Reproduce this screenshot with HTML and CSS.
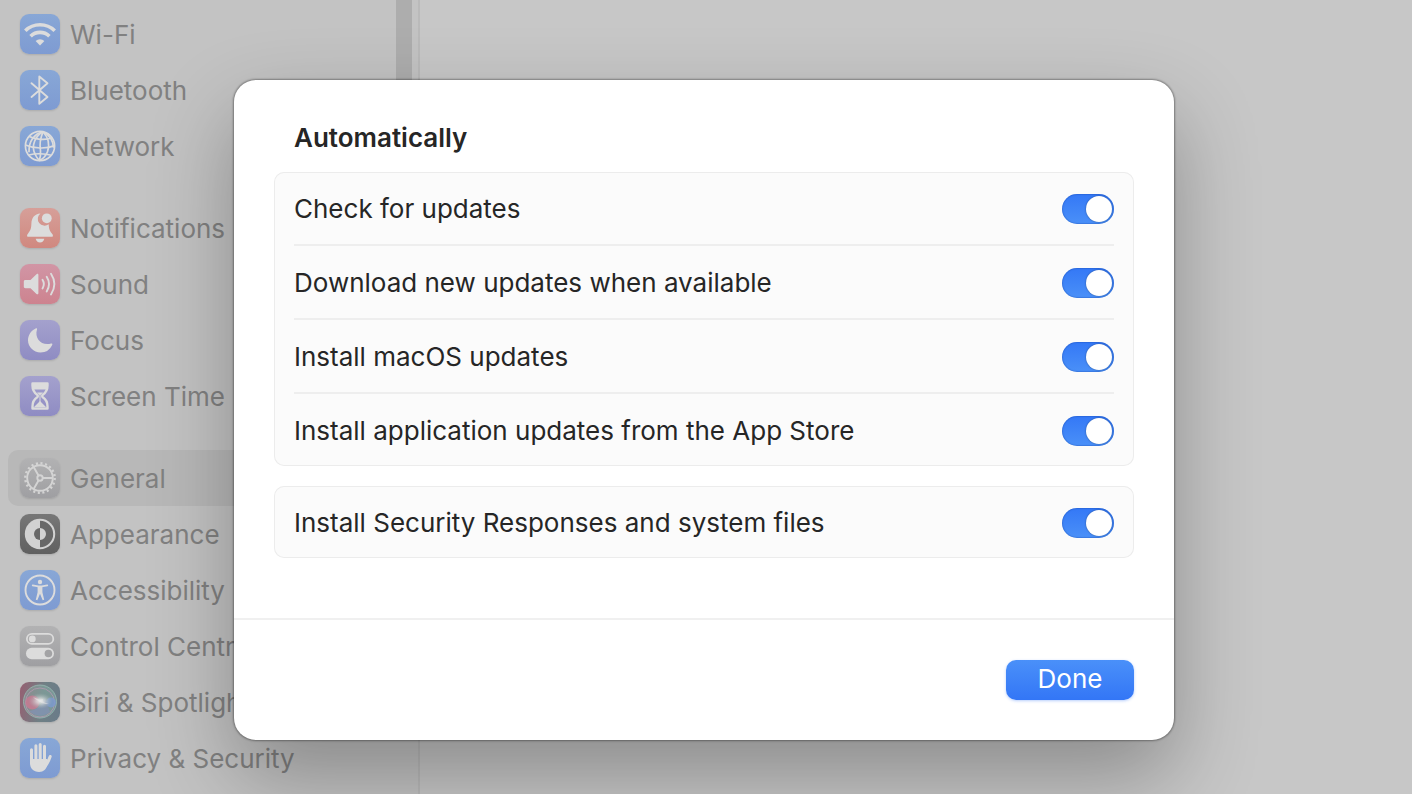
FILE: index.html
```html
<!DOCTYPE html>
<html lang="en-GB">
<head>
  <meta charset="UTF-8">
  <meta name="viewport" content="width=device-width, initial-scale=1.0">
  <title>System Settings</title>
  <link rel="stylesheet" href="styles.css">
</head>
<body>
  <div class="window">
    <!-- ======= Sidebar ======= -->
    <div class="sidebar">
      <nav class="sidebar-nav" aria-label="Settings">
        <ul class="nav-group">
          <li><a class="nav-item" href="#wifi">
            <svg class="icon icon-blue" viewBox="0 0 40 40" aria-hidden="true">
              <g fill="none" stroke="#dcdcdc" stroke-width="3.6">
                <path d="M5.3 16.8a21 21 0 0 1 29.4 0"/>
                <path d="M10.6 22.2a13.5 13.5 0 0 1 18.8 0"/>
              </g>
              <path d="M15.6 26.9a6.5 6.5 0 0 1 8.8 0L20 31.4z" fill="#dcdcdc"/>
            </svg>
            <span>Wi-Fi</span></a></li>
          <li><a class="nav-item" href="#bluetooth">
            <svg class="icon icon-blue" viewBox="0 0 40 40" aria-hidden="true">
              <path d="M11.5 13.2L27.5 27 19.3 33.8V6.5L27.5 13.2 11.5 27" fill="none" stroke="#dcdcdc" stroke-width="1.9" stroke-linejoin="round" stroke-linecap="round"/>
            </svg>
            <span>Bluetooth</span></a></li>
          <li><a class="nav-item" href="#network">
            <svg class="icon icon-blue" viewBox="0 0 40 40" aria-hidden="true">
              <g fill="none" stroke="#dcdcdc" stroke-width="1.7">
                <circle cx="20" cy="20" r="14.6"/>
                <path d="M23 5.8C15 10 11 20 15 28c1.200 2.800 2.600 5 4.500 6.600"/>
                <path d="M23 5.800c-3 7-3.500 13-2.500 19 .3 4-.2 7-1.200 9.800"/>
                <path d="M23 5.800c5.500 6 7 13 4.500 20-1.500 4-4.500 7.200-8.500 8.800"/>
                <path d="M23 5.800c-8 1.500-14.500 9-14 20.500"/>
                <path d="M23 5.800c6 3 10 8 10.600 16"/>
                <path d="M9.300 10.500c6 3 16 4 22.500 1.500"/>
                <path d="M5.400 19c8 3.600 21 4.200 29.200.6"/>
                <path d="M9 29c6-1.800 16-1.600 22.500.2"/>
              </g>
            </svg>
            <span>Network</span></a></li>
        </ul>

        <ul class="nav-group">
          <li><a class="nav-item" href="#notifications">
            <svg class="icon icon-red" viewBox="0 0 40 40" aria-hidden="true">
              <path d="M20.400 5.500c-6 .4-8.800 4.500-9 10-.2 5-.8 7-3.300 9.900-1.700 2-1.300 3.400.6 3.400h22.600c1.900 0 2.300-1.400.6-3.400-2.300-2.700-3-4.700-3.200-9.200a6.300 6.300 0 0 1-8.300-10.700z" fill="#dcdcdc"/>
              <path d="M15.700 30.800h8.600c-.5 2.400-2 3.800-4.300 3.800s-3.800-1.400-4.300-3.800z" fill="#dcdcdc"/>
              <circle cx="26.800" cy="10.300" r="4.900" fill="#dcdcdc"/>
            </svg>
            <span>Notifications</span></a></li>
          <li><a class="nav-item" href="#sound">
            <svg class="icon icon-pink" viewBox="0 0 40 40" aria-hidden="true">
              <path d="M5.500 16h5l6-5.700c.9-.8 1.900-.5 1.900.8v18c0 1.300-1 1.600-1.900.8l-6-5.700h-5c-1.200 0-1.700-.6-1.700-1.700v-4.800c0-1.100.5-1.700 1.700-1.700z" fill="#dcdcdc"/>
              <g fill="none" stroke="#dcdcdc" stroke-width="1.900" stroke-linecap="round">
                <path d="M22.500 15.800c1.700 2.700 1.700 5.900 0 8.600"/>
                <path d="M26.700 12.800c3 4.700 3 9.900 0 14.600"/>
                <path d="M31 9.800c4.400 6.700 4.400 13.900 0 20.600"/>
              </g>
            </svg>
            <span>Sound</span></a></li>
          <li><a class="nav-item" href="#focus">
            <svg class="icon icon-purple" viewBox="0 0 40 40" aria-hidden="true">
              <path d="M15.600 8.400c1-.5 1.700 0 1.400 1.100C14.200 18.500 21.500 26.200 31 23.600c1.200-.3 1.700.3 1.200 1.400A13 13 0 0 1 20.500 32.500C13.500 32.500 8 27 8 20.300c0-5.200 3-9.800 7.600-11.900z" fill="#dcdcdc"/>
            </svg>
            <span>Focus</span></a></li>
          <li><a class="nav-item" href="#screentime">
            <svg class="icon icon-purple" viewBox="0 0 40 40" aria-hidden="true">
              <path d="M12.500 7.500h15v2c0 5-1.400 7-4.700 9.200-.8.600-.8 2 0 2.600 3.300 2.200 4.700 4.500 4.700 9.200v2h-15v-2c0-4.700 1.400-7 4.700-9.200.8-.6.800-2 0-2.600-3.300-2.200-4.700-4.200-4.700-9.200z" fill="none" stroke="#dcdcdc" stroke-width="2.400" stroke-linejoin="round"/>
              <path d="M13 7h14v6.500H13zM20 25l6 6h-12z" fill="#dcdcdc"/>
              <path d="M17 16.500h6l-2.500 2.500v7h-1v-7z" fill="#dcdcdc"/>
            </svg>
            <span>Screen Time</span></a></li>
        </ul>

        <ul class="nav-group">
          <li><a class="nav-item active" href="#general" aria-current="page">
            <svg class="icon icon-gray" viewBox="0 0 40 40" aria-hidden="true">
              <circle cx="20" cy="20" r="14.700" fill="none" stroke="#d4d4d4" stroke-width="2.400" stroke-dasharray="2.100 2.518"/>
              <g fill="none" stroke="#d4d4d4" stroke-width="1.900">
                <circle cx="20" cy="20" r="12.800"/>
                <circle cx="20" cy="20" r="2.700"/>
                <path d="M22.700 20h10M18.650 17.660l-5-8.660M18.650 22.340l-5 8.660"/>
              </g>
            </svg>
            <span>General</span></a></li>
          <li><a class="nav-item" href="#appearance">
            <svg class="icon icon-dark" viewBox="0 0 40 40" aria-hidden="true">
              <circle cx="20" cy="20" r="15.200" fill="#d2d2d2"/>
              <path d="M20 6.800a13.200 13.200 0 0 1 0 26.400v-7.200a6 6 0 0 0 0-12z" fill="#686868"/>
              <path d="M20 14a6 6 0 0 0 0 12z" fill="#686868"/>
            </svg>
            <span>Appearance</span></a></li>
          <li><a class="nav-item" href="#accessibility">
            <svg class="icon icon-blue" viewBox="0 0 40 40" aria-hidden="true">
              <circle cx="20" cy="20" r="14.500" fill="none" stroke="#dcdcdc" stroke-width="1.900"/>
              <circle cx="20" cy="12" r="2.200" fill="#dcdcdc"/>
              <path d="M12.700 15.300l5.500 1.100h3.600l5.500-1.100M20 17v6" fill="none" stroke="#dcdcdc" stroke-width="1.700" stroke-linecap="round"/>
              <path d="M17.600 16.200h4.800v6l1.800 7.600-1.500.5-2.700-6.500-2.700 6.500-1.500-.5 1.800-7.600z" fill="#dcdcdc"/>
            </svg>
            <span>Accessibility</span></a></li>
          <li><a class="nav-item" href="#control">
            <svg class="icon icon-gray" viewBox="0 0 40 40" aria-hidden="true">
              <rect x="6.900" y="7.900" width="26.400" height="10" rx="5" fill="none" stroke="#dcdcdc" stroke-width="1.800"/>
              <circle cx="12.300" cy="12.900" r="3.400" fill="#dcdcdc"/>
              <rect x="6" y="21.800" width="28" height="11.400" rx="5.700" fill="#dcdcdc"/>
              <circle cx="28.400" cy="27.500" r="3.800" fill="#a3a3a5"/>
            </svg>
            <span>Control Centre</span></a></li>
          <li><a class="nav-item" href="#siri">
            <svg class="icon icon-siri" viewBox="0 0 40 40" aria-hidden="true">
              <defs>
                <radialGradient id="siriGlow">
                  <stop offset="0" stop-color="#ececec"/>
                  <stop offset=".35" stop-color="#dde0e0" stop-opacity=".7"/>
                  <stop offset="1" stop-color="#a0b0b0" stop-opacity="0"/>
                </radialGradient>
              </defs>
              <circle cx="20" cy="19.500" r="16.500" fill="#8bb5aa" fill-opacity=".45" stroke="#9bbbb5" stroke-width=".8"/>
              <circle cx="20" cy="20.500" r="14.500" fill="none" stroke="#b599b2" stroke-width=".8"/>
              <circle cx="12.500" cy="20.500" r="7" fill="#cf7791" opacity=".75"/>
              <circle cx="31" cy="20.500" r="5" fill="#7c9ad0" opacity=".8"/>
              <path d="M9 29c8-1 13-6 16-13l5 14c-6 5-15 5-21-1z" fill="#838fba" opacity=".6"/>
              <ellipse cx="20.500" cy="19" rx="12" ry="8" fill="url(#siriGlow)"/>
              <path d="M13 15c4 2 7 3 10 2-1 2 1 4 6 5-4 0-7-.5-9-2-2-1-5-3-7-5z" fill="#e6e6e6" opacity=".6"/>
            </svg>
            <span>Siri &amp; Spotlight</span></a></li>
          <li><a class="nav-item" href="#privacy">
            <svg class="icon icon-blue" viewBox="0 0 40 40" aria-hidden="true">
              <path d="M10 21h17.500l-.5 5.500c-.5 4.700-3.300 7.500-8 7.500-5.500 0-9-3.500-9-9z" fill="#dcdcdc"/>
              <path d="M11.500 25V11.700M15.900 22V7.700M20.200 22V6.400M24.500 22V8.200" fill="none" stroke="#dcdcdc" stroke-width="3" stroke-linecap="round"/>
              <path d="M25 28.500c2.500-3 4-6.500 5.200-10" fill="none" stroke="#dcdcdc" stroke-width="3" stroke-linecap="round"/>
            </svg>
            <span>Privacy &amp; Security</span></a></li>
        </ul>
      </nav>
      <div class="scroll-thumb"></div>
    </div>
    <main class="content"></main>
  </div>

  <!-- ======= Automatic updates sheet ======= -->
  <div class="overlay">
    <form class="sheet" role="dialog" aria-labelledby="sheetTitle">
      <div class="sheet-body">
        <h2 id="sheetTitle">Automatically</h2>
        <div class="card">
          <div class="row">
            <label for="check">Check for updates</label>
            <input class="switch" type="checkbox" role="switch" id="check" checked>
          </div>
          <div class="row">
            <label for="download">Download new updates when available</label>
            <input class="switch" type="checkbox" role="switch" id="download" checked>
          </div>
          <div class="row">
            <label for="macos">Install macOS updates</label>
            <input class="switch" type="checkbox" role="switch" id="macos" checked>
          </div>
          <div class="row">
            <label for="apps">Install application updates from the App Store</label>
            <input class="switch" type="checkbox" role="switch" id="apps" checked>
          </div>
        </div>
        <div class="card">
          <div class="row">
            <label for="security">Install Security Responses and system files</label>
            <input class="switch" type="checkbox" role="switch" id="security" checked>
          </div>
        </div>
      </div>
      <div class="sheet-footer">
        <button class="btn" type="button">Done</button>
      </div>
    </form>
  </div>
</body>
</html>
```
FILE: styles.css
```css
* {
  box-sizing: border-box;
  margin: 0;
  padding: 0;
}

body {
  height: 100vh;
  overflow: hidden;
  font-family: Inter, "Liberation Sans", sans-serif;
  font-size: 26px;
  line-height: 32px;
  color: #262626;
  background: #c7c7c7;
}

/* ======= Window ======= */
.window {
  display: flex;
  height: 100%;
}
.content {
  flex: 1;
}

/* ======= Sidebar ======= */
.sidebar {
  display: flex;
  flex: 0 0 420px;
  padding: 6px 6px 6px 8px;
  background: #c3c3c3;
  border-right: 2px solid #bababa;
}
.sidebar-nav {
  flex: 1;
}
.scroll-thumb {
  width: 16px;
  height: 480px;
  margin-top: -6px;
  background: #adadad;
}
.nav-group {
  list-style: none;
  margin-bottom: 26px;
}
.nav-item {
  display: flex;
  align-items: center;
  gap: 10px;
  height: 56px;
  padding: 0 12px;
  border-radius: 10px;
  color: #818181;
  text-decoration: none;
  white-space: nowrap;
}
.nav-item span {
  padding-top: 2px;
}
.nav-item.active {
  background: #b8b8b8;
}

/* ======= Icons ======= */
.icon {
  flex: none;
  width: 40px;
  height: 40px;
  border-radius: 9px;
  box-shadow: 0 1px 2px rgba(0, 0, 0, 0.12);
}
.icon-blue {
  background: linear-gradient(#88a7d6, #7e9bd2);
}
.icon-red {
  background: linear-gradient(#d69f99, #d0887f);
}
.icon-pink {
  background: linear-gradient(#d195a5, #cd838f);
}
.icon-purple {
  background: linear-gradient(#a4a1cd, #8f8cc3);
}
.icon-gray {
  background: linear-gradient(#b2b2b3, #9f9fa2);
}
.icon-dark {
  background: linear-gradient(#777, #606060);
}
.icon-siri {
  background: linear-gradient(100deg, #965f71, #6f8085 55%, #6a7b89);
}

/* ======= Sheet ======= */
.overlay {
  position: absolute;
  inset: 0;
  padding: 80px 4px 0 0;
}
.sheet {
  width: 940px;
  max-width: 100%;
  margin: 0 auto;
  background: #fff;
  border-radius: 22px;
  box-shadow: 0 0 2px 1px rgba(0, 0, 0, 0.35), 0 36px 84px rgba(0, 0, 0, 0.3);
}
.sheet-body {
  padding: 40px 40px 60px;
}
.sheet-body h2 {
  margin-bottom: 18px;
  padding: 2px 20px 0;
  font-size: 26px;
  font-weight: 600;
}
.card {
  padding: 0 20px;
  background: #fbfbfb;
  border-radius: 10px;
  box-shadow: inset 0 0 0 1px #ececec;
}
.card + .card {
  margin-top: 20px;
}
.row {
  display: flex;
  align-items: center;
  justify-content: space-between;
  padding: 21px 0 19px;
}
.row + .row {
  border-top: 2px solid #eee;
}

/* ======= Switch ======= */
.switch {
  appearance: none;
  display: flex;
  width: 52px;
  height: 30px;
  padding: 2px;
  border-radius: 15px;
  background: #d5d5d5;
  cursor: pointer;
}
.switch::before {
  content: "";
  width: 26px;
  height: 26px;
  border-radius: 50%;
  background: #fff;
  box-shadow: 0 0 2px rgba(0, 0, 0, 0.4);
}
.switch:checked {
  justify-content: flex-end;
  background: linear-gradient(#3478f6, #4a90f8);
  box-shadow: inset 0 0 1px 1px rgba(20, 70, 170, 0.3);
}

/* ======= Footer ======= */
.sheet-footer {
  display: flex;
  justify-content: flex-end;
  padding: 40px;
  border-top: 2px solid #f0f0f0;
}
.btn {
  width: 128px;
  height: 40px;
  padding-bottom: 2px;
  border: none;
  border-radius: 10px;
  background: linear-gradient(#4a90f9, #3376f6);
  box-shadow: 0 1px 3px rgba(51, 118, 246, 0.35);
  color: #fff;
  font: inherit;
  cursor: pointer;
}
```
